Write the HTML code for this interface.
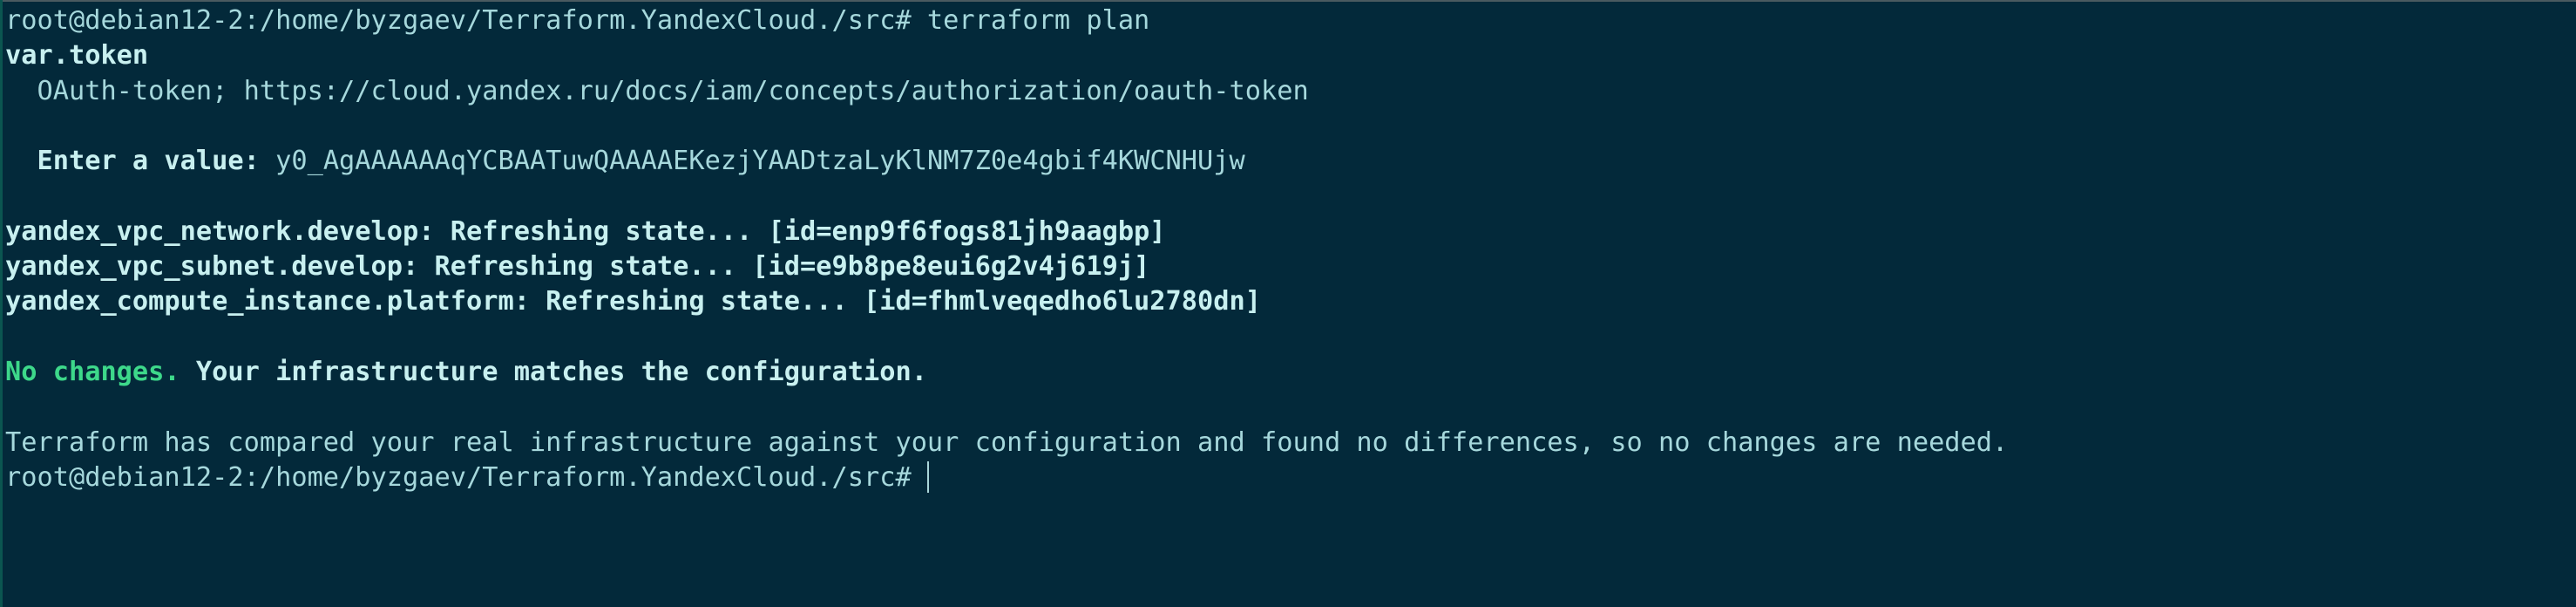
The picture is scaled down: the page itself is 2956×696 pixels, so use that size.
<!DOCTYPE html>
<html><head><meta charset="utf-8"><style>
html,body{margin:0;padding:0;}
body{width:2956px;height:696px;background:#03293a;position:relative;overflow:hidden;}
.bl{position:absolute;left:0;top:0;width:3px;height:696px;background:#0b5550;}
.tl{position:absolute;left:0;top:0;width:2956px;height:2px;background:#4a5a60;}
pre{position:absolute;left:6px;top:4px;margin:0;font-family:"DejaVu Sans Mono","Liberation Mono",monospace;font-size:30.3px;line-height:40.3px;color:#a6d8dc;}
b{color:#c8f0f0;}
.g{color:#3dd88a;font-weight:bold;}
.cur{display:inline-block;width:2px;height:36px;background:#a9d6da;vertical-align:-8px;}
</style></head><body><div class="tl"></div><div class="bl"></div>
<pre>root@debian12-2:/home/byzgaev/Terraform.YandexCloud./src# terraform plan
<b>var.token</b>
  OAuth-token; https://cloud.yandex.ru/docs/iam/concepts/authorization/oauth-token

  <b>Enter a value:</b> y0_AgAAAAAAqYCBAATuwQAAAAEKezjYAADtzaLyKlNM7Z0e4gbif4KWCNHUjw

<b>yandex_vpc_network.develop: Refreshing state... [id=enp9f6fogs81jh9aagbp]</b>
<b>yandex_vpc_subnet.develop: Refreshing state... [id=e9b8pe8eui6g2v4j619j]</b>
<b>yandex_compute_instance.platform: Refreshing state... [id=fhmlveqedho6lu2780dn]</b>

<span class="g">No changes.</span><b> Your infrastructure matches the configuration.</b>

Terraform has compared your real infrastructure against your configuration and found no differences, so no changes are needed.
root@debian12-2:/home/byzgaev/Terraform.YandexCloud./src# <span class="cur"></span></pre>
</body></html>
